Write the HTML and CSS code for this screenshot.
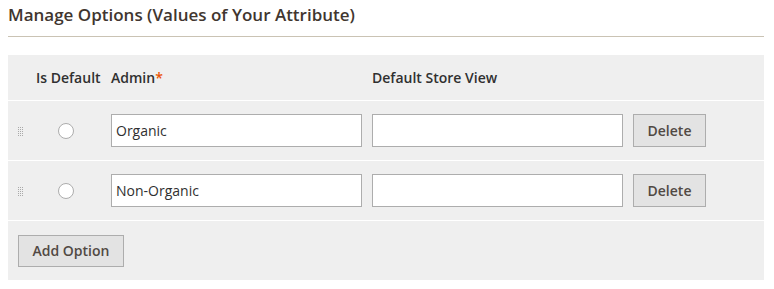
FILE: index.html
```html
<!DOCTYPE html>
<html lang="en">
<head>
    <meta charset="UTF-8">
    <meta name="viewport" content="width=device-width, initial-scale=1.0">
    <link rel="stylesheet" href="styles.css">
    <title>Manage Options</title>
</head>
<body>
    <div class="fieldset">
        <h2 class="fieldset-title">Manage Options (Values of Your Attribute)</h2>

        <div class="options-table">
            <div class="options-row options-head">
                <div class="cell"></div>
                <div class="cell cell-default">Is Default</div>
                <div class="cell">Admin<span class="required">*</span></div>
                <div class="cell">Default Store View</div>
                <div class="cell"></div>
            </div>

            <div class="options-row">
                <div class="cell cell-handle">
                    <svg class="handle" width="5" height="9" viewBox="0 0 5 9">
                        <g fill="#a9a9a9">
                            <rect x="0" y="0" width="1" height="1"/><rect x="2" y="0" width="1" height="1"/><rect x="4" y="0" width="1" height="1"/>
                            <rect x="0" y="2" width="1" height="1"/><rect x="2" y="2" width="1" height="1"/><rect x="4" y="2" width="1" height="1"/>
                            <rect x="0" y="4" width="1" height="1"/><rect x="2" y="4" width="1" height="1"/><rect x="4" y="4" width="1" height="1"/>
                            <rect x="0" y="6" width="1" height="1"/><rect x="2" y="6" width="1" height="1"/><rect x="4" y="6" width="1" height="1"/>
                            <rect x="0" y="8" width="1" height="1"/><rect x="2" y="8" width="1" height="1"/><rect x="4" y="8" width="1" height="1"/>
                        </g>
                    </svg>
                </div>
                <div class="cell"><span class="radio"></span></div>
                <div class="cell"><input type="text" class="text-input" value="Organic"></div>
                <div class="cell"><input type="text" class="text-input" value=""></div>
                <div class="cell"><button type="button" class="btn">Delete</button></div>
            </div>

            <div class="options-row">
                <div class="cell cell-handle">
                    <svg class="handle" width="5" height="9" viewBox="0 0 5 9">
                        <g fill="#a9a9a9">
                            <rect x="0" y="0" width="1" height="1"/><rect x="2" y="0" width="1" height="1"/><rect x="4" y="0" width="1" height="1"/>
                            <rect x="0" y="2" width="1" height="1"/><rect x="2" y="2" width="1" height="1"/><rect x="4" y="2" width="1" height="1"/>
                            <rect x="0" y="4" width="1" height="1"/><rect x="2" y="4" width="1" height="1"/><rect x="4" y="4" width="1" height="1"/>
                            <rect x="0" y="6" width="1" height="1"/><rect x="2" y="6" width="1" height="1"/><rect x="4" y="6" width="1" height="1"/>
                            <rect x="0" y="8" width="1" height="1"/><rect x="2" y="8" width="1" height="1"/><rect x="4" y="8" width="1" height="1"/>
                        </g>
                    </svg>
                </div>
                <div class="cell"><span class="radio"></span></div>
                <div class="cell"><input type="text" class="text-input" value="Non-Organic"></div>
                <div class="cell"><input type="text" class="text-input" value=""></div>
                <div class="cell"><button type="button" class="btn">Delete</button></div>
            </div>

            <div class="options-foot">
                <button type="button" class="btn btn-add">Add Option</button>
            </div>
        </div>
    </div>
</body>
</html>
```

FILE: styles.css
```css
body {
    margin: 0;
    padding: 4px 10px 8px 8px;
    font-family: "Open Sans", sans-serif;
    font-size: 14px;
    color: #303030;
    background-color: #fff;
}

.fieldset-title {
    margin: 0;
    padding-bottom: 10px;
    border-bottom: 1px solid #cac3b4;
    font-size: 17px;
    font-weight: 600;
    line-height: 22px;
    color: #41362f;
}

.options-table {
    margin-top: 18px;
    background-color: #efefef;
}

.options-row {
    display: grid;
    grid-template-columns: 22px 81px 261px 261px 73px;
    align-items: center;
    height: 59px;
    border-top: 1px solid #fff;
}

.options-head {
    height: 45px;
    border-top: none;
    font-weight: 600;
}

.cell-default {
    padding-left: 6px;
}

.cell-handle {
    padding-left: 10px;
    display: flex;
    align-items: center;
}

.handle {
    display: block;
    margin-top: 1px;
}

.required {
    color: #eb5202;
}

.radio {
    display: block;
    width: 14px;
    height: 14px;
    margin-left: 28px;
    border: 1px solid #adadad;
    border-radius: 50%;
    background-color: #fff;
}

.text-input {
    box-sizing: border-box;
    display: block;
    width: 251px;
    height: 33px;
    margin: 0;
    padding: 0 4px;
    border: 1px solid #adadad;
    border-radius: 0;
    background-color: #fff;
    font-family: "Open Sans", sans-serif;
    font-size: 14px;
    color: #303030;
}

.btn {
    box-sizing: border-box;
    display: block;
    height: 33px;
    margin: 0;
    padding: 0;
    border: 1px solid #adadad;
    border-radius: 0;
    background-color: #e3e3e3;
    font-family: "Open Sans", sans-serif;
    font-size: 14px;
    font-weight: 600;
    color: #514943;
    white-space: nowrap;
}

.options-row .btn {
    width: 73px;
}

.options-foot {
    height: 59px;
    border-top: 1px solid #fff;
    padding-left: 10px;
    display: flex;
    align-items: center;
}

.btn-add {
    width: 106px;
    height: 32px;
}
```
